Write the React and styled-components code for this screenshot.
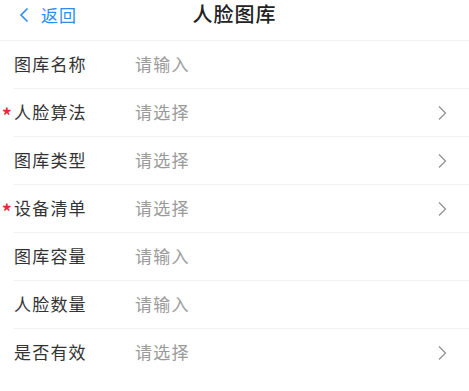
import React from 'react'
import styled, { createGlobalStyle } from 'styled-components'

const GlobalStyle = createGlobalStyle`
  body {
    margin: 0;
    background: #fff;
    font-family: "Noto Sans CJK SC", "Noto Sans", sans-serif;
  }
`

const fields = [
  { label: '图库名称', placeholder: '请输入' },
  { label: '人脸算法', placeholder: '请选择', required: true, select: true },
  { label: '图库类型', placeholder: '请选择', select: true },
  { label: '设备清单', placeholder: '请选择', required: true, select: true },
  { label: '图库容量', placeholder: '请输入' },
  { label: '人脸数量', placeholder: '请输入' },
  { label: '是否有效', placeholder: '请选择', select: true },
]

export default function App() {
  return (
    <Page>
      <GlobalStyle />
      <NavBar>
        <BackButton>
          <svg width="12" height="16" viewBox="0 0 12 16">
            <path d="M9.5 1.5 L3 8 L9.5 14.5" fill="none" stroke="#2d8cf0" strokeWidth="1.6" />
          </svg>
          <span>返回</span>
        </BackButton>
        <Title>人脸图库</Title>
      </NavBar>
      <Form>
        {fields.map((f, i) => (
          <Row key={f.label} $last={i === fields.length - 1}>
            <Label>
              {f.required && <Star>*</Star>}
              {f.label}
            </Label>
            <Placeholder>{f.placeholder}</Placeholder>
            {f.select && (
              <Arrow width="10" height="16" viewBox="0 0 10 16">
                <path d="M2 1.5 L8.5 8 L2 14.5" fill="none" stroke="#8e8e8e" strokeWidth="1.2" />
              </Arrow>
            )}
          </Row>
        ))}
      </Form>
    </Page>
  )
}

const Page = styled.div`
  width: 469px;
  min-height: 391px;
  background: #fff;
`

const NavBar = styled.div`
  position: relative;
  height: 41px;
  box-sizing: border-box;
  border-bottom: 1px solid #f1f1f1;
  display: flex;
  align-items: center;
  justify-content: center;
`

const BackButton = styled.div`
  position: absolute;
  left: 18px;
  top: 0;
  height: 29px;
  display: flex;
  align-items: center;
  gap: 11px;
  color: #2d8cf0;
  font-size: 17px;
  letter-spacing: 1px;
`

const Title = styled.div`
  font-size: 20px;
  font-weight: 500;
  color: #222;
  margin-bottom: 13px;
  letter-spacing: 1px;
`

const Form = styled.div`
  display: flex;
  flex-direction: column;
`

const Row = styled.div`
  height: 48px;
  margin-left: 14px;
  padding-right: 22px;
  box-sizing: border-box;
  border-bottom: 1px solid ${p => (p.$last ? 'transparent' : '#f1f1f1')};
  display: flex;
  align-items: center;
`

const Label = styled.div`
  position: relative;
  width: 121px;
  font-size: 17px;
  color: #333;
  letter-spacing: 1.2px;
  padding-bottom: 3px;
`

const Star = styled.span`
  position: absolute;
  left: -12px;
  top: 6px;
  color: #e02b3a;
  font-size: 19px;
  font-weight: 700;
  line-height: 1;
`

const Placeholder = styled.div`
  flex: 1;
  font-size: 17px;
  color: #9a9a9a;
  letter-spacing: 1.2px;
  padding-bottom: 3px;
`

const Arrow = styled.svg`
  flex-shrink: 0;
`
